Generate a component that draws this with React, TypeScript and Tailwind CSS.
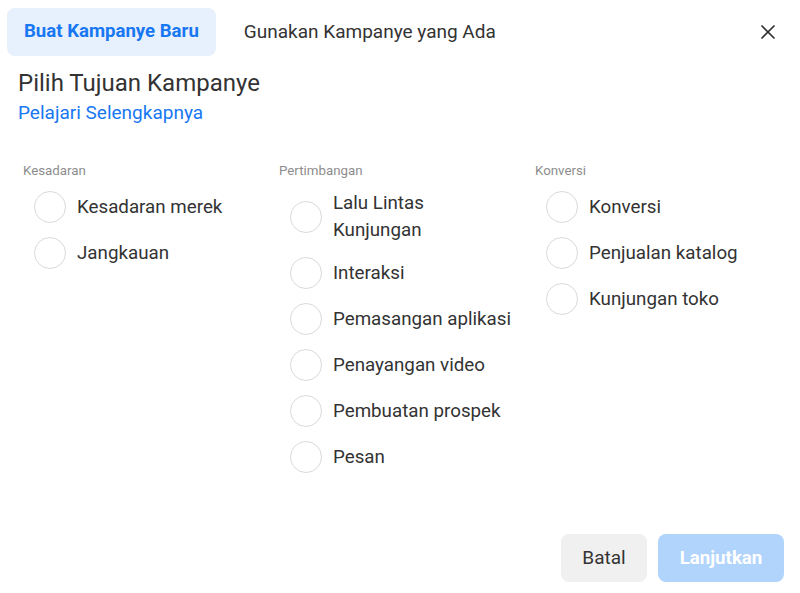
import { X } from "lucide-react";

const groups = [
  { title: "Kesadaran", items: ["Kesadaran merek", "Jangkauan"] },
  {
    title: "Pertimbangan",
    items: [
      "Lalu Lintas Kunjungan",
      "Interaksi",
      "Pemasangan aplikasi",
      "Penayangan video",
      "Pembuatan prospek",
      "Pesan",
    ],
  },
  { title: "Konversi", items: ["Konversi", "Penjualan katalog", "Kunjungan toko"] },
];

function Option({ label }: { label: string }) {
  return (
    <label className="flex items-center gap-[11px] pl-[11px] py-[6px] cursor-pointer">
      <span className="my-px h-[32px] w-[32px] shrink-0 rounded-full border border-[#d9dadc] bg-white" />
      <span className="max-w-[181px] text-[18.75px] leading-[27px] text-[#333]">{label}</span>
    </label>
  );
}

export default function App() {
  return (
    <div
      className="flex h-[593px] w-[800px] flex-col bg-white"
      style={{ fontFamily: "Roboto, 'Liberation Sans', sans-serif" }}
    >
      <div className="flex items-center pl-[7px] pr-[20px] pt-[8px]">
        <button className="h-[48px] rounded-lg bg-[#e7f0fd] px-[17px] text-[18.6px] font-bold text-[#1877f2]">
          Buat Kampanye Baru
        </button>
        <button className="ml-[11px] h-[48px] px-[17px] text-[19px] text-[#333]">
          Gunakan Kampanye yang Ada
        </button>
        <button className="ml-auto text-[#333]">
          <X size={24} strokeWidth={1.75} />
        </button>
      </div>

      <div className="px-[18px]">
        <h1 className="mt-[12px] text-[24px] leading-[30px] text-[#333]">Pilih Tujuan Kampanye</h1>
        <a className="mt-[3px] block text-[19px] leading-[24px] text-[#1877f2]">Pelajari Selengkapnya</a>
      </div>

      <div className="mt-[38px] grid grid-cols-[256px_256px_256px] px-[23px]">
        {groups.map((g) => (
          <div key={g.title}>
            <div className="text-[13.3px] leading-[16px] text-[#8d8d8d]">{g.title}</div>
            <div className="mt-[5px] flex flex-col">
              {g.items.map((it) => (
                <Option key={it} label={it} />
              ))}
            </div>
          </div>
        ))}
      </div>

      <div className="mt-auto flex justify-end gap-[11px] pb-[11px] pr-[16px]">
        <button className="h-[48px] w-[86px] rounded-lg bg-[#f0f0f0] text-[19px] text-[#333]">Batal</button>
        <button className="h-[48px] w-[126px] rounded-lg bg-[#b1d4fd] text-[18.7px] font-bold text-white">
          Lanjutkan
        </button>
      </div>
    </div>
  );
}
